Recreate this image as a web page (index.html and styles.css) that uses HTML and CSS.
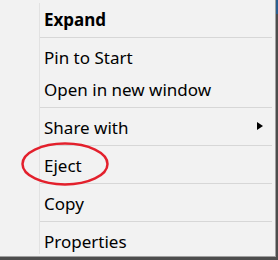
FILE: index.html
```html
<!DOCTYPE html>
<html lang="en">
<head>
  <meta charset="UTF-8" />
  <title>Context menu</title>
  <link rel="stylesheet" href="styles.css">
</head>
<body>
  <div class="menu">
    <ul class="list">
      <li class="item bold">Expand</li>
      <li class="sep"></li>
      <li class="item">Pin to Start</li>
      <li class="item">Open in new window</li>
      <li class="sep"></li>
      <li class="item sub">Share with <span class="arrow"></span></li>
      <li class="sep"></li>
      <li class="item">Eject</li>
      <li class="sep"></li>
      <li class="item">Copy</li>
      <li class="sep"></li>
      <li class="item">Properties</li>
    </ul>

    <!-- red mark around Eject -->
    <svg class="circle" width="96" height="50" viewBox="0 0 96 50">
      <ellipse cx="48" cy="25" rx="42.5" ry="20.5" fill="none" stroke="#e3202c" stroke-width="2.5" />
    </svg>
  </div>
</body>
</html>
```

FILE: styles.css
```css
body {
  margin: 0;
  width: 278px;
  height: 260px;
  overflow: hidden;
  background: linear-gradient(to bottom, #2a5d8e 0, #2a5d8e 14px, #4d4d4d 14px);
  font-family: "Noto Sans", "Open Sans", sans-serif;
  color: #000;
}

.menu {
  position: relative;
  width: 275px;
  height: 256px;
  background: #f2f2f2;
  border-right: 1px solid #a0a0a0;
  border-bottom: 1px solid #a0a0a0;
  overflow: hidden;
}

.list {
  list-style: none;
  margin: 3px 0 0 39px;
  padding: 0;
  border-left: 1px solid #e2e2e2;
  height: 251px;
}

.item {
  display: flex;
  align-items: center;
  height: 32px;
  padding-left: 4px;
  font-size: 17px;
  white-space: nowrap;
}

.bold {
  font-weight: bold;
}

.sub {
  justify-content: space-between;
  padding-right: 12px;
}

.arrow {
  width: 0;
  height: 0;
  border-left: 6px solid #000;
  border-top: 4.5px solid transparent;
  border-bottom: 4.5px solid transparent;
  margin-bottom: 2px;
}

.sep {
  height: 1px;
  margin: 2px 3px 3px 0;
  background: #d7d7d7;
}

.circle {
  position: absolute;
  left: 17px;
  top: 139px;
}
```
